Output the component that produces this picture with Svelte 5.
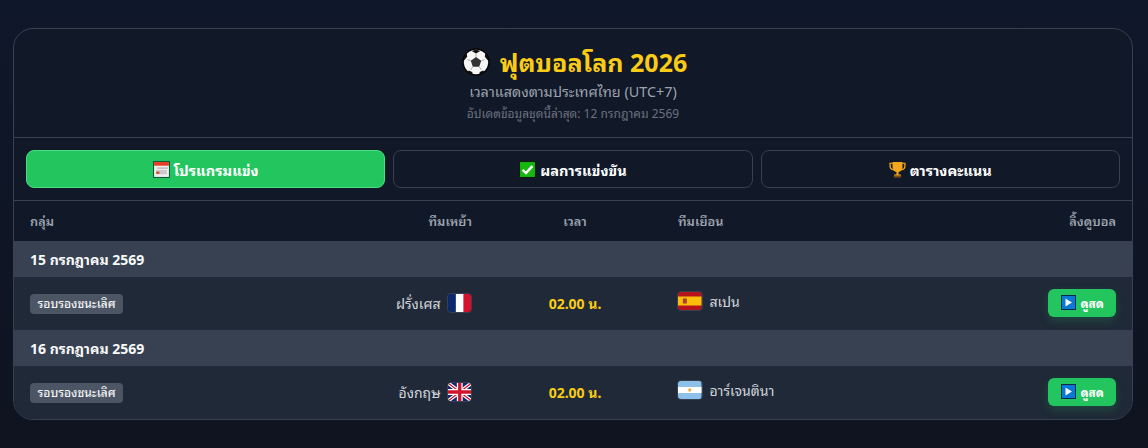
<script>
  const tabs = [
    { id: 'schedule', label: 'โปรแกรมแข่ง', active: true },
    { id: 'results', label: 'ผลการแข่งขัน', active: false },
    { id: 'standings', label: 'ตารางคะแนน', active: false }
  ];
  const days = [
    { date: '15 กรกฎาคม 2569', home: 'ฝรั่งเศส', homeFlag: 'fr', away: 'สเปน', awayFlag: 'es' },
    { date: '16 กรกฎาคม 2569', home: 'อังกฤษ', homeFlag: 'gb', away: 'อาร์เจนตินา', awayFlag: 'ar' }
  ];
</script>

{#snippet flag(code)}
  <svg class="flag" viewBox="0 0 24 18" preserveAspectRatio="none" aria-hidden="true">
    {#if code === 'fr'}
      <rect width="8" height="18" fill="#0b2a6b" /><rect x="8" width="8" height="18" fill="#fff" /><rect x="16" width="8" height="18" fill="#d8102c" />
    {:else if code === 'es'}
      <rect width="24" height="18" fill="#b5141c" /><rect y="4.5" width="24" height="9" fill="#fbbf0b" />
      <rect x="5" y="6.5" width="4" height="5" fill="#a8402a" /><rect x="6" y="5.6" width="2" height="1.4" fill="#c9822b" />
    {:else if code === 'gb'}
      <rect width="24" height="18" fill="#10266b" />
      <path d="M0 0 24 18M24 0 0 18" stroke="#fff" stroke-width="3.6" />
      <path d="M0 0 24 18M24 0 0 18" stroke="#cf142b" stroke-width="1.2" />
      <path d="M12 0V18M0 9H24" stroke="#fff" stroke-width="6" />
      <path d="M12 0V18M0 9H24" stroke="#cf142b" stroke-width="3.4" />
    {:else}
      <rect width="24" height="18" fill="#8ec1ea" /><rect y="6" width="24" height="6" fill="#fff" /><circle cx="12" cy="9" r="1.7" fill="#f3b33d" />
    {/if}
  </svg>
{/snippet}

{#snippet tabIcon(id)}
  {#if id === 'schedule'}
    <svg class="emoji" viewBox="0 0 16 16" aria-hidden="true">
      <rect width="16" height="16" fill="#0c5a3a" /><rect x="1" y="1" width="14" height="14" fill="#eeeeee" /><rect x="1" y="1" width="14" height="3.4" fill="#e53d24" />
      <rect x="4" y="6" width="10" height="1.4" fill="#bdbdbd" /><rect x="3" y="8.5" width="10" height="4" fill="#c9c9c9" /><rect x="3" y="10" width="3" height="2" fill="#e53d24" />
    </svg>
  {:else if id === 'results'}
    <svg class="emoji" viewBox="0 0 16 16" aria-hidden="true">
      <rect width="16" height="16" fill="#0a1f0a" /><rect x="1" y="1" width="14" height="14" fill="#16b80f" />
      <path d="M3.4 8.3 6.6 11.4 12.6 4.8" fill="none" stroke="#fff" stroke-width="2.3" />
    </svg>
  {:else}
    <svg class="emoji" viewBox="0 0 16 16" aria-hidden="true">
      <path d="M3.5 2.2H1v2.6c0 2 1.5 3.4 3.6 3.6M12.5 2.2H15v2.6c0 2-1.5 3.4-3.6 3.6" fill="none" stroke="#e8a317" stroke-width="1.3" />
      <path d="M3.3 1h9.4v4.6c0 2.8-1.9 4.4-3.7 4.8v2.2h2.2V15H4.8v-2.4H7v-2.2C5.2 10 3.3 8.4 3.3 5.6Z" fill="#f5a81c" />
      <rect x="4.6" y="13.6" width="6.8" height="2" fill="#7c4a12" />
    </svg>
  {/if}
{/snippet}

<div class="page">
  <main class="card">
    <header class="head">
      <h1>
        <svg class="ball" viewBox="0 0 28 28" aria-hidden="true">
          <circle cx="14" cy="14" r="13.8" fill="#050505" />
          <circle cx="14" cy="14" r="12.2" fill="#f6f6f6" />
          <path d="M14 9 19.2 12.8 17.2 18.8H10.8L8.8 12.8Z" fill="#333" />
          <path d="M9.8 3 14 5.4 18.2 3 14 1.5ZM2 12.6 5.2 8.8 4.6 4.6 1.6 9ZM26 12.6 22.8 8.8 23.4 4.6 26.4 9ZM6.8 22.4 10.2 24 10.8 26.6 5.4 24.4ZM21.2 22.4 17.8 24 17.2 26.6 22.6 24.4Z" fill="#0f0f0f" />
          <path d="M14 5.6V9M8.8 12.8 5.4 11.6M19.2 12.8 22.6 11.6M10.8 18.8 8.8 21.8M17.2 18.8 19.2 21.8" stroke="#9a9a9a" stroke-width=".8" />
        </svg>
        <span>ฟุตบอลโลก 2026</span>
      </h1>
      <p class="sub">เวลาแสดงตามประเทศไทย (UTC+7)</p>
      <p class="updated">อัปเดตข้อมูลชุดนี้ล่าสุด: 12 กรกฎาคม 2569</p>
    </header>

    <nav class="tabs">
      {#each tabs as tab}
        <button class="tab" class:active={tab.active} type="button">
          {@render tabIcon(tab.id)}
          <span>{tab.label}</span>
        </button>
      {/each}
    </nav>

    <table>
      <colgroup>
        <col class="c-group" /><col class="c-home" /><col class="c-time" /><col class="c-away" /><col class="c-link" />
      </colgroup>
      <thead>
        <tr>
          <th class="left">กลุ่ม</th>
          <th class="right">ทีมเหย้า</th>
          <th class="center">เวลา</th>
          <th class="left">ทีมเยือน</th>
          <th class="right">ลิ้งดูบอล</th>
        </tr>
      </thead>
      <tbody>
        {#each days as day}
          <tr class="date"><td colspan="5">{day.date}</td></tr>
          <tr class="match">
            <td><span class="tag">รอบรองชนะเลิศ</span></td>
            <td class="right"><span class="team home">{day.home}{@render flag(day.homeFlag)}</span></td>
            <td class="center time">02.00 น.</td>
            <td><span class="team away">{@render flag(day.awayFlag)}{day.away}</span></td>
            <td class="right link">
              <button class="watch" type="button">
                <svg class="play" viewBox="0 0 15 15" aria-hidden="true">
                  <rect width="15" height="15" fill="#0b2a4a" /><rect x="1" y="1" width="13" height="13" fill="#0b78d6" /><path d="M4.5 3.5 11 7.5 4.5 11.5Z" fill="#f4f8fc" />
                </svg>
                <span>ดูสด</span>
              </button>
            </td>
          </tr>
        {/each}
      </tbody>
    </table>
  </main>
</div>

<style>
  :global(body) {
    margin: 0;
    background: #0f1524;
  }
  .page {
    box-sizing: border-box;
    height: 448px;
    padding: 28px 15px 28px 13px;
    background: linear-gradient(180deg, #0f172a, #0f1420);
    font-family: "Noto Sans", "Noto Sans Thai Looped", "Liberation Sans", sans-serif;
  }
  .card {
    box-sizing: border-box;
    height: 392px;
    overflow: hidden;
    background: #111827;
    border: 1px solid #374151;
    border-radius: 20px;
  }
  .head {
    box-sizing: border-box;
    height: 109px;
    padding-top: 15px;
    text-align: center;
    border-bottom: 1px solid #374151;
  }
  h1 {
    display: flex;
    justify-content: center;
    align-items: center;
    gap: 10px;
    margin: 0;
    padding-left: 3px;
    height: 36px;
    font-size: 25px;
    line-height: 36px;
    font-weight: 700;
    color: #facc15;
  }
  .ball {
    width: 28px;
    height: 28px;
  }
  .sub {
    margin: 2px 0 0;
    font-size: 14.4px;
    line-height: 20px;
    color: #9ca3af;
  }
  .updated {
    margin: 3px 0 0;
    font-size: 12px;
    line-height: 18px;
    color: #6b7280;
  }
  .tabs {
    box-sizing: border-box;
    display: grid;
    grid-template-columns: repeat(3, 1fr);
    gap: 8px;
    height: 63px;
    padding: 12px;
    border-bottom: 1px solid #374151;
  }
  .tab {
    display: flex;
    align-items: center;
    justify-content: center;
    gap: 4px;
    height: 38px;
    padding: 0;
    background: transparent;
    border: 1px solid #374151;
    border-radius: 8px;
    color: #fff;
    font: 700 14.6px "Noto Sans", "Noto Sans Thai Looped", "Liberation Sans", sans-serif;
  }
  .tab.active {
    background: #22c55e;
    border-color: #4ade80;
  }
  .emoji {
    width: 17px;
    height: 17px;
    flex: none;
  }
  table {
    width: 1118px;
    border-collapse: collapse;
    table-layout: fixed;
  }
  .c-group { width: 300px; }
  .c-home { width: 174px; }
  .c-time { width: 174px; }
  .c-away { width: 300px; }
  .c-link { width: 170px; }
  th {
    box-sizing: border-box;
    height: 40px;
    padding: 0 16px 2px;
    font-size: 12.8px;
    font-weight: 600;
    color: #9ca3af;
  }
  td {
    padding: 0 16px;
    color: #d1d5db;
    font-size: 14px;
  }
  .left { text-align: left; }
  .right { text-align: right; }
  .center { text-align: center; }
  .date td {
    box-sizing: border-box;
    height: 36px;
    padding-bottom: 2px;
    background: #374151;
    color: #f9fafb;
    font-size: 14px;
    font-weight: 700;
  }
  .match td {
    box-sizing: border-box;
    height: 53px;
    background: #1f2937;
  }
  .match td.time,
  .match td.link {
    padding-bottom: 2px;
  }
  .tag {
    display: inline-block;
    padding: 0 7.5px;
    height: 20px;
    line-height: 20px;
    border-radius: 4px;
    background: #4b5563;
    color: #f3f4f6;
    font-size: 12px;
    font-weight: 500;
  }
  .team {
    display: inline-flex;
    align-items: center;
    gap: 6px;
    color: #d1d5db;
    font-size: 14px;
  }
  .team.home {
    margin-bottom: 2px;
  }
  .team.away {
    gap: 7px;
    margin-bottom: 6px;
    margin-left: -1px;
  }
  .flag {
    box-sizing: content-box;
    width: 23.5px;
    height: 18px;
    border: 1px solid #374151;
    border-radius: 4px;
    flex: none;
  }
  .time {
    color: #facc15;
    font-weight: 700;
  }
  .watch {
    display: inline-flex;
    align-items: center;
    gap: 4px;
    height: 28px;
    padding: 0 12px 0 13px;
    vertical-align: middle;
    background: #22c55e;
    border: 0;
    border-radius: 6px;
    box-shadow: 0 4px 10px rgba(34, 197, 94, 0.2);
    color: #fff;
    font: 700 12px "Noto Sans", "Noto Sans Thai Looped", "Liberation Sans", sans-serif;
  }
  .play {
    width: 15px;
    height: 15px;
  }
</style>
